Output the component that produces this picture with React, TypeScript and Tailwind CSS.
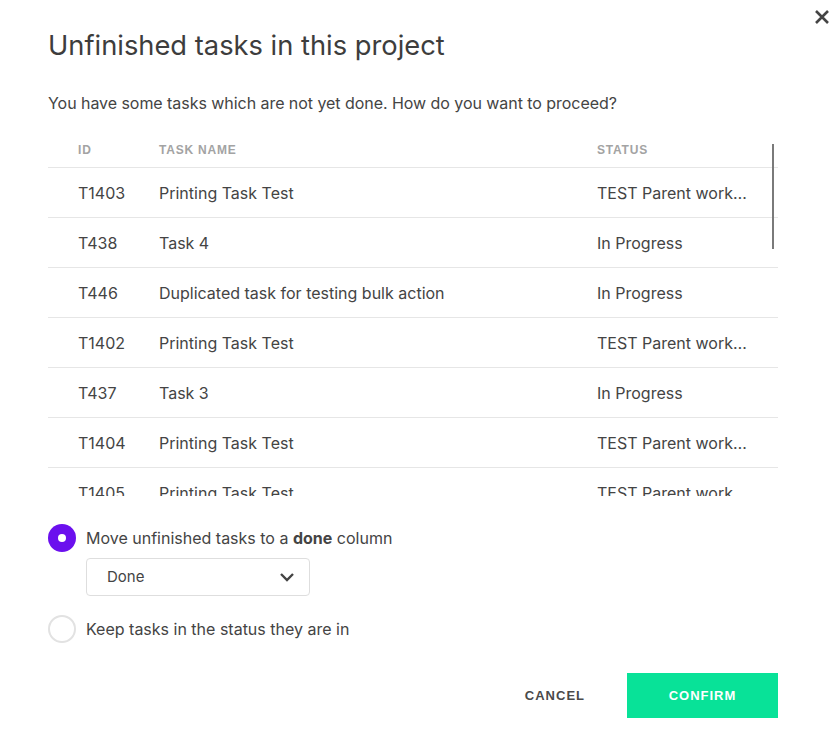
import { useState } from "react";

type Task = { id: string; name: string; status: string };

const tasks: Task[] = [
  { id: "T1403", name: "Printing Task Test", status: "TEST Parent workflow" },
  { id: "T438", name: "Task 4", status: "In Progress" },
  { id: "T446", name: "Duplicated task for testing bulk action", status: "In Progress" },
  { id: "T1402", name: "Printing Task Test", status: "TEST Parent workflow" },
  { id: "T437", name: "Task 3", status: "In Progress" },
  { id: "T1404", name: "Printing Task Test", status: "TEST Parent workflow" },
  { id: "T1405", name: "Printing Task Test", status: "TEST Parent workflow" },
  { id: "T439", name: "Task 5", status: "In Progress" },
];

const Radio = ({ checked, onClick }: { checked: boolean; onClick: () => void }) => (
  <button
    onClick={onClick}
    className={
      checked
        ? "flex h-[28px] w-[28px] shrink-0 items-center justify-center rounded-full bg-[#6b10ee]"
        : "h-[28px] w-[28px] shrink-0 rounded-full border-2 border-[#e2e2e2] bg-white"
    }
  >
    {checked && <span className="h-[8px] w-[8px] rounded-full bg-white" />}
  </button>
);

const App = () => {
  const [option, setOption] = useState<"move" | "keep">("move");

  return (
    <div className="relative h-[732px] w-[838px] bg-white font-['Inter',sans-serif] text-[#444]">
      <button className="absolute right-[8px] top-[9px] flex h-[16px] w-[16px] items-center justify-center text-[#444]">
        <svg viewBox="0 0 16 16" className="h-[16px] w-[16px]">
          <path d="M2 2 L14 14 M14 2 L2 14" stroke="currentColor" strokeWidth="2.6" />
        </svg>
      </button>

      <div className="flex flex-col pl-[48px] pr-[60px] pt-[30px]">
        <h1 className="text-[27.3px] leading-[32px] text-[#3d3d3d]">
          Unfinished tasks in this project
        </h1>
        <p className="mt-[29px] text-[16px] leading-[24px] tracking-[-0.05px]">
          You have some tasks which are not yet done. How do you want to proceed?
        </p>

        <div className="relative mt-[15px] h-[366px] overflow-hidden">
          <div className="grid h-[38px] grid-cols-[111px_438px_1fr] items-center border-b border-[#e6e6e6] pt-[3px] font-['Liberation_Sans',sans-serif] text-[12px] font-bold uppercase tracking-[0.8px] text-[#a3a3a3]">
            <span className="pl-[30px]">ID</span>
            <span>Task name</span>
            <span>Status</span>
          </div>
          {tasks.map((t) => (
            <div
              key={t.id}
              className="grid h-[50px] grid-cols-[111px_438px_1fr] items-center border-b border-[#e6e6e6] text-[16px]"
            >
              <span className="pl-[30px]">{t.id}</span>
              <span className="truncate">{t.name}</span>
              <span className="w-[150px] truncate">{t.status}</span>
            </div>
          ))}
          <div className="absolute right-[4px] top-[14px] h-[105px] w-[2px] bg-[#7a7a7a]" />
        </div>

        <div className="mt-[28px] flex items-center gap-[10px]">
          <Radio checked={option === "move"} onClick={() => setOption("move")} />
          <span className="text-[16px]">
            Move unfinished tasks to a <b className="font-bold">done</b> column
          </span>
        </div>
        <div className="ml-[38px] mt-[6px] flex h-[38px] w-[224px] items-center justify-between rounded-[4px] border border-[#dedede] pl-[20px] pr-[14px] text-[15px]">
          <span>Done</span>
          <svg viewBox="0 0 16 10" className="h-[10px] w-[16px]">
            <path d="M2 2 L8 8 L14 2" fill="none" stroke="#444" strokeWidth="2.4" />
          </svg>
        </div>

        <div className="mt-[19px] flex items-center gap-[10px]">
          <Radio checked={option === "keep"} onClick={() => setOption("keep")} />
          <span className="text-[16px]">Keep tasks in the status they are in</span>
        </div>

        <div className="mt-[30px] flex justify-end gap-[12px] font-['Liberation_Sans',sans-serif] text-[13px] font-bold tracking-[1px]">
          <button className="h-[45px] px-[30px] uppercase text-[#4a4a4a]">Cancel</button>
          <button className="h-[45px] w-[151px] bg-[#08e298] uppercase text-white">Confirm</button>
        </div>
      </div>
    </div>
  );
};

export default App;
